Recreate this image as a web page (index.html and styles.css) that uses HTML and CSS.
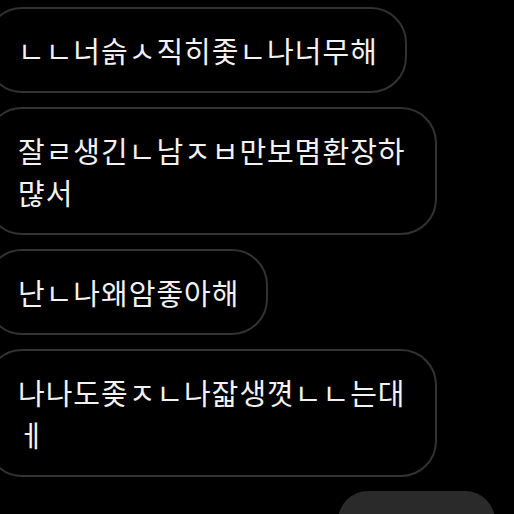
FILE: index.html
```html
<!DOCTYPE html>
<html lang="ko">
<head>
    <meta charset="UTF-8">
    <meta name="viewport" content="width=device-width, initial-scale=1.0">
    <title>Chat</title>
    <link rel="stylesheet" href="styles.css">
</head>
<body>
    <div class="chat">
        <div class="bubble">ㄴㄴ너슭ㅅ직히좇ㄴ나너무해</div>
        <div class="bubble">잘ㄹ생긴ㄴ남ㅈㅂ만보몀환장하먆서</div>
        <div class="bubble">난ㄴ나왜암좋아해</div>
        <div class="bubble">나나도좆ㅈㄴ나잛생&#xAF07;ㄴㄴ는대ㅔ</div>
        <div class="bubble mine"></div>
    </div>
</body>
</html>
```

FILE: styles.css
```css
html, body {
    margin: 0;
    height: 100%;
    overflow: hidden;
    background-color: #000;
}
.chat {
    display: flex;
    flex-direction: column;
    align-items: flex-start;
    gap: 14px;
    padding-top: 7px;
    font-family: "Noto Sans CJK KR", "Noto Sans", sans-serif;
    font-size: 29px;
    letter-spacing: 1px;
    line-height: 42px;
    color: #f2f2f2;
}
.bubble {
    margin-left: -14px;
    max-width: 390px;
    padding: 20px 27px 20px 30px;
    border: 2px solid #323232;
    border-radius: 36px;
    word-break: break-all;
}
.mine {
    align-self: flex-end;
    margin-left: 0;
    margin-right: 19px;
    width: 157px;
    height: 60px;
    padding: 0;
    border: none;
    border-radius: 32px;
    background-color: #2a2a2a;
}
```
